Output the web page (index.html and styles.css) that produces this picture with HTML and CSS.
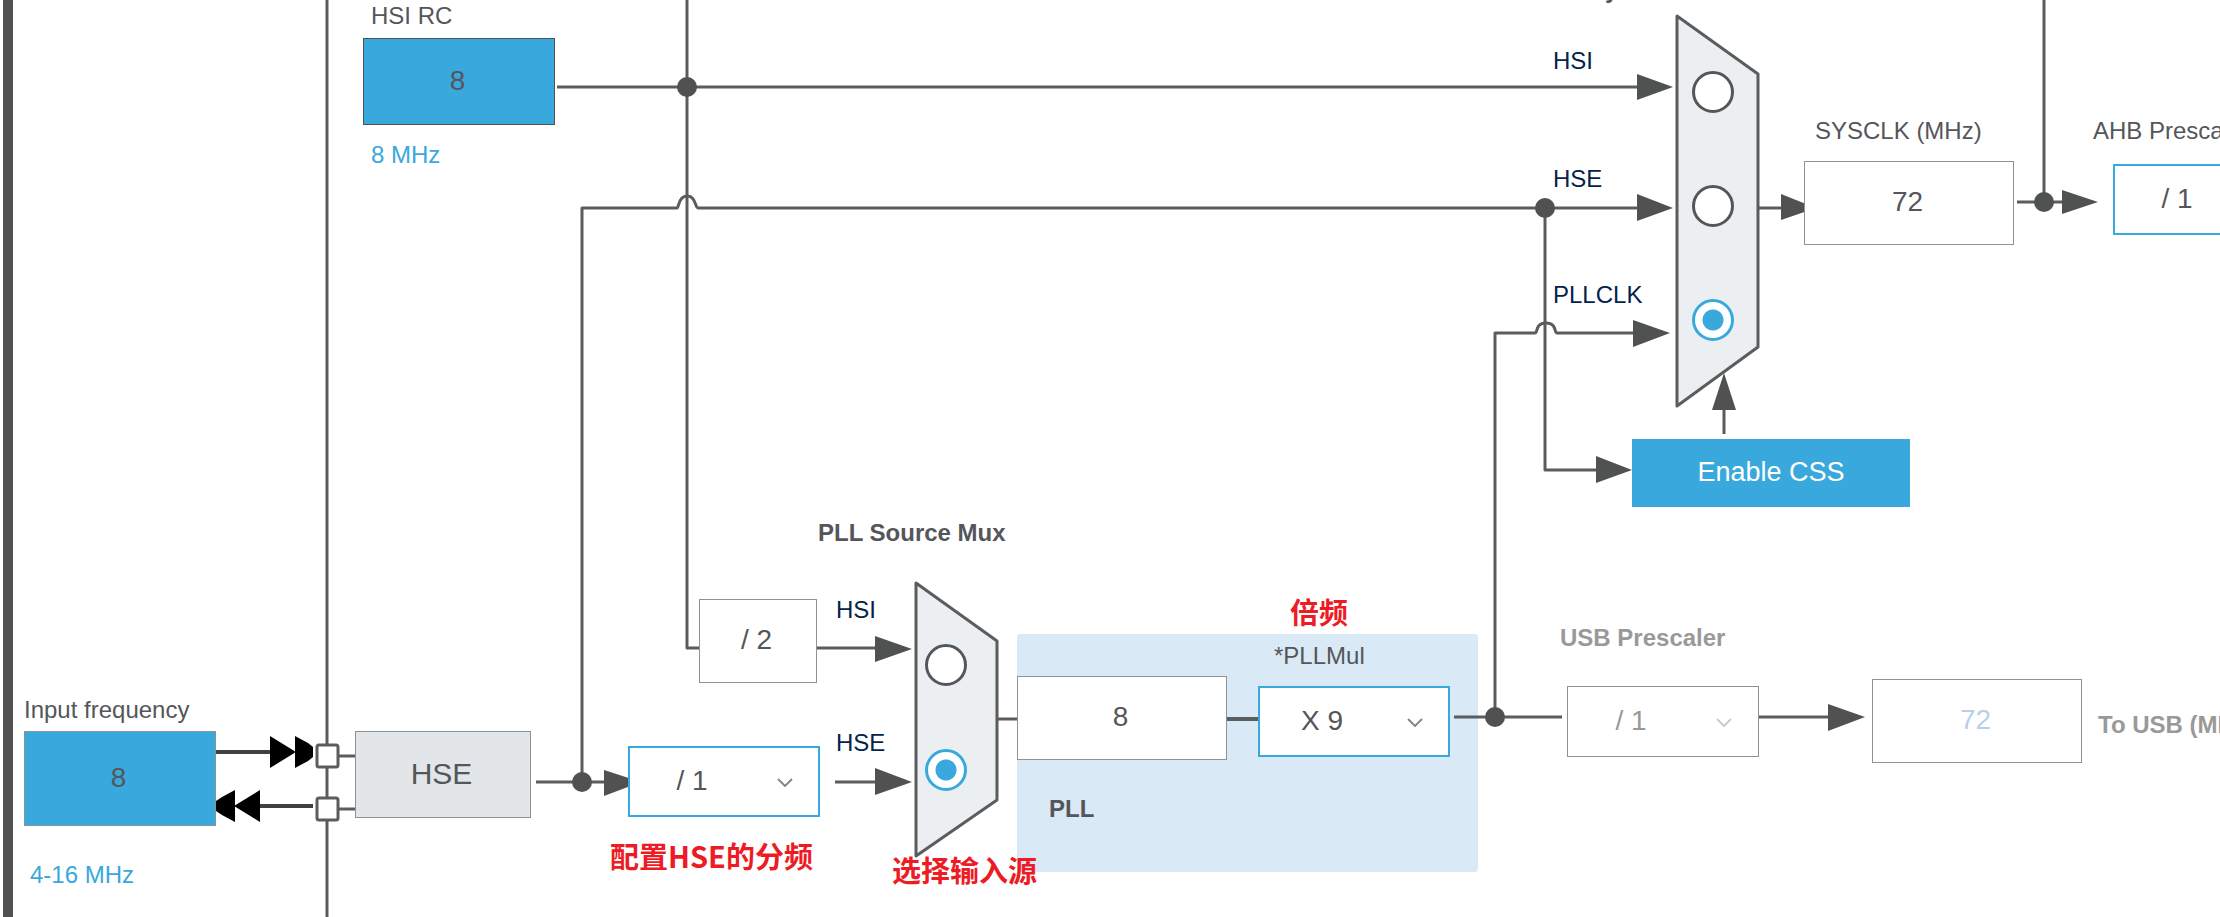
FILE: index.html
```html
<!DOCTYPE html>
<html lang="zh-CN">
<head>
<meta charset="utf-8">
<title>Clock Configuration</title>
<link rel="stylesheet" href="styles.css">
</head>
<body>
<main class="canvas">
  <div class="region pll-region"></div>

  <svg class="wires" aria-hidden="true">
    <rect class="pin-bar" x="3" y="0" width="10" height="100%"/>
    <line class="wire" x1="327" y1="0" x2="327" y2="100%"/>

    <polygon class="mux" points="1677,16 1758,74 1758,347 1677,406"/>
    <polygon class="mux" points="916,583 997,641 997,800 916,856"/>

    <!-- HSI -->
    <path class="wire" d="M557 87H1640M687 0V648H699M817 648H880"/>
    <!-- HSE -->
    <path class="wire" d="M536 782H606M582 782V208H677C679 208 678 196 687 196S695 208 698 208H1640M835 782H880"/>
    <path class="wire" d="M1545 208V470H1600M1724 434V405"/>
    <!-- PLL -->
    <path class="wire" d="M997 719H1017M1454 717H1562M1759 717H1830"/>
    <path class="wire wide" d="M1227 719H1258"/>
    <path class="wire" d="M1495 717V333H1535C1538 333 1535 323 1546 323S1554 333 1557 333H1636"/>
    <!-- SYSCLK -->
    <path class="wire" d="M1758 208H1785M2017 202H2066M2044 0V202"/>

    <path class="solid" d="M1637 74L1673 87L1637 100ZM1637 194L1673 208L1637 221ZM1633 320L1670 333L1633 347ZM1596 456L1632 470L1596 483ZM1712 410L1724 373L1736 410ZM1781 194L1816 208L1781 220ZM2062 190L2098 202L2062 214ZM875 636L912 649L875 662ZM875 768L912 782L875 795ZM604 770L641 782L604 796ZM1828 704L1865 717L1828 731Z"/>
    <g class="solid">
      <circle cx="687" cy="87" r="10"/><circle cx="1545" cy="208" r="10"/>
      <circle cx="582" cy="782" r="10"/><circle cx="1495" cy="717" r="10"/>
      <circle cx="2044" cy="202" r="10"/>
    </g>

    <!-- oscillator pins -->
    <path class="pin-line" d="M216 752H272M258 806H313"/>
    <path class="pin-arrow" d="M270 736L296 752L270 768ZM295 736L308 743L313 747V757L308 761L295 768ZM260 790L234 806L260 822ZM235 790L222 797L216 801V811L222 815L235 822Z"/>
    <path class="wire" d="M338 756H355M338 809H355"/>
    <rect class="pin" x="317" y="745" width="21" height="22" rx="2"/>
    <rect class="pin" x="317" y="798" width="21" height="22" rx="2"/>
  </svg>

  <h2 class="label bold sysmux-title">System Clock Mux</h2>
  <h2 class="label bold pllmux-title">PLL Source Mux</h2>

  <span class="label hsi-title">HSI RC</span>
  <output class="box blue hsi-box" aria-label="HSI RC">8</output>
  <span class="label range hsi-range">8 MHz</span>

  <label class="label input-title" for="input-freq">Input frequency</label>
  <input class="box blue input-box" id="input-freq" type="text" value="8">
  <span class="label range input-range">4-16 MHz</span>
  <div class="box hse-box">HSE</div>

  <div class="box half-box">/ 2</div>
  <div class="picker hse-div">
    <select aria-label="HSE prescaler"><option>/ 1</option><option>/ 2</option></select>
    <svg class="chevron" viewBox="0 0 16 9" aria-hidden="true"><path d="M1 1L8 8L15 1"/></svg>
  </div>

  <label class="label signal src-hsi" for="pll-hsi">HSI</label>
  <input class="radio pll-hsi" type="radio" name="pllsrc" id="pll-hsi">
  <label class="label signal src-hse" for="pll-hse">HSE</label>
  <input class="radio pll-hse" type="radio" name="pllsrc" id="pll-hse" checked>

  <output class="box pll-in" aria-label="PLL input">8</output>
  <label class="label mul-title" for="pllmul">*PLLMul</label>
  <div class="picker pll-mul">
    <select id="pllmul"><option>X 9</option><option>X 8</option></select>
    <svg class="chevron" viewBox="0 0 16 9" aria-hidden="true"><path d="M1 1L8 8L15 1"/></svg>
  </div>
  <span class="label bold pll-title">PLL</span>

  <label class="label signal sys-l1" for="sys-hsi">HSI</label>
  <input class="radio sys-hsi" type="radio" name="sysclk" id="sys-hsi">
  <label class="label signal sys-l2" for="sys-hse">HSE</label>
  <input class="radio sys-hse" type="radio" name="sysclk" id="sys-hse">
  <label class="label signal sys-l3" for="sys-pll">PLLCLK</label>
  <input class="radio sys-pll" type="radio" name="sysclk" id="sys-pll" checked>
  <button class="css-button" type="button">Enable CSS</button>

  <label class="label sysclk-title" for="sysclk-value">SYSCLK (MHz)</label>
  <input class="box sysclk-box" id="sysclk-value" type="text" value="72">
  <label class="label ahb-title" for="ahb">AHB Prescaler</label>
  <div class="picker ahb-div">
    <select id="ahb"><option>/ 1</option><option>/ 2</option></select>
    <svg class="chevron" viewBox="0 0 16 9" aria-hidden="true"><path d="M1 1L8 8L15 1"/></svg>
  </div>

  <label class="label bold muted usb-title" for="usb">USB Prescaler</label>
  <div class="picker disabled usb-div">
    <select id="usb" disabled><option>/ 1</option></select>
    <svg class="chevron" viewBox="0 0 16 9" aria-hidden="true"><path d="M1 1L8 8L15 1"/></svg>
  </div>
  <output class="box usb-box" aria-label="USB clock">72</output>
  <span class="label bold muted usb-out">To USB (MHz)</span>

  <span class="note note-div">配置HSE的分频</span>
  <span class="note note-src">选择输入源</span>
  <span class="note note-mul">倍频</span>
</main>
</body>
</html>
```

FILE: styles.css
```css
:root {
  --ink: #4f5250;
  --line: #5a5d5b;
  --text: #55565a;
  --blue: #39a8dc;
  --navy: #03234b;
  --edge: #8b9298;
}

* { box-sizing: border-box; }

body {
  margin: 0;
  background: #fff;
  color: var(--text);
  font-family: "Liberation Sans", Arial, sans-serif;
  font-size: 24px;
}

/* Free canvas: every node below is placed at its diagram position. */
.canvas {
  position: relative;
  min-height: 100vh;
  overflow: hidden;
}

.wires {
  position: absolute;
  inset: 0;
  width: 100%;
  height: 100%;
}

.wire { fill: none; stroke: var(--line); stroke-width: 3; stroke-linejoin: round; }
.wide { stroke-width: 4; }
.solid, .pin-bar { fill: var(--ink); }
.mux { fill: #ebeff2; stroke: var(--line); stroke-width: 3; stroke-linejoin: round; }
.pin { fill: #fff; stroke: var(--line); stroke-width: 3; }
.pin-line { stroke: #404040; stroke-width: 4; }
.pin-arrow { fill: #000; }

.region { position: absolute; background: #d9e9f6; border-radius: 3px; }
.pll-region { left: 1017px; top: 634px; width: 461px; height: 238px; }

.label {
  position: absolute;
  margin: 0;
  font-size: 24px;
  font-weight: 400;
  line-height: 28px;
  white-space: nowrap;
}
.bold { font-weight: 700; }
.range { color: var(--blue); }
.signal { color: var(--navy); }
.muted { color: #999; }

.box {
  position: absolute;
  display: flex;
  align-items: center;
  justify-content: center;
  margin: 0;
  padding: 0 3px 2px 0;
  border: 1px solid var(--edge);
  background: #fff;
  color: var(--text);
  font: 28px "Liberation Sans", Arial, sans-serif;
  text-align: center;
}
.blue { background: var(--blue); }

.picker {
  position: absolute;
  width: 192px;
  height: 71px;
}
.picker select {
  appearance: none;
  width: 100%;
  height: 100%;
  margin: 0;
  padding: 0 64px 3px 0;
  border: 2px solid var(--blue);
  border-radius: 0;
  background: #fff;
  color: var(--text);
  font: 28px "Liberation Sans", Arial, sans-serif;
  text-align: center;
  text-align-last: center;
}
.chevron {
  position: absolute;
  left: 149px;
  top: 32px;
  width: 16px;
  height: 9px;
  fill: none;
  stroke: #888;
  stroke-width: 2;
  pointer-events: none;
}
.disabled select { border: 1px solid var(--edge); color: #999; opacity: 1; }
.disabled .chevron { stroke: #ccc; }

.radio {
  appearance: none;
  position: absolute;
  width: 42px;
  height: 42px;
  margin: 0;
  border: 3px solid var(--text);
  border-radius: 50%;
  background: #fff;
}
.radio:checked {
  border-color: var(--blue);
  background: radial-gradient(circle, var(--blue) 10px, #fff 11px);
}

.css-button {
  position: absolute;
  left: 1632px;
  top: 439px;
  width: 278px;
  height: 68px;
  padding: 0 0 2px;
  border: 0;
  background: var(--blue);
  color: #fff;
  font: 27px "Liberation Sans", Arial, sans-serif;
}

.note {
  position: absolute;
  color: #ed1c24;
  font: 700 29px/32px "Noto Sans CJK SC", sans-serif;
  white-space: nowrap;
}

/* HSI and HSE sources */
.hsi-title { left: 371px; top: 2px; }
.hsi-box { left: 363px; top: 38px; width: 192px; height: 87px; border-color: var(--ink); }
.hsi-range { left: 371px; top: 141px; }
.input-title { left: 24px; top: 696px; }
.input-box { left: 24px; top: 731px; width: 192px; height: 95px; }
.input-range { left: 30px; top: 861px; }
.hse-box { left: 355px; top: 731px; width: 176px; height: 87px; background: #e2e6e9; font-size: 30px; }

/* PLL source mux */
.pllmux-title { left: 818px; top: 519px; }
.half-box { left: 699px; top: 599px; width: 118px; height: 84px; }
.hse-div { left: 628px; top: 746px; }
.src-hsi { left: 836px; top: 596px; }
.src-hse { left: 836px; top: 729px; }
.pll-hsi { left: 925px; top: 644px; }
.pll-hse { left: 925px; top: 749px; }

/* PLL */
.pll-in { left: 1017px; top: 676px; width: 210px; height: 84px; }
.mul-title { left: 1274px; top: 642px; }
.pll-mul { left: 1258px; top: 686px; }
.pll-title { left: 1049px; top: 795px; }

/* System clock mux */
.sysmux-title { left: 1589px; top: -24px; }
.sys-l1 { left: 1553px; top: 47px; }
.sys-l2 { left: 1553px; top: 165px; }
.sys-l3 { left: 1553px; top: 281px; }
.sys-hsi { left: 1692px; top: 71px; }
.sys-hse { left: 1692px; top: 185px; }
.sys-pll { left: 1692px; top: 299px; }
.sysclk-title { left: 1815px; top: 117px; }
.sysclk-box { left: 1804px; top: 161px; width: 210px; height: 84px; }
.ahb-title { left: 2093px; top: 117px; }
.ahb-div { left: 2113px; top: 164px; }

/* USB */
.usb-title { left: 1560px; top: 624px; }
.usb-div { left: 1567px; top: 686px; }
.usb-box { left: 1872px; top: 679px; width: 210px; height: 84px; color: #b9d0e8; }
.usb-out { left: 2098px; top: 711px; }

/* Annotations */
.note-div { left: 610px; top: 839px; }
.note-src { left: 892px; top: 853px; }
.note-mul { left: 1290px; top: 595px; }
```
